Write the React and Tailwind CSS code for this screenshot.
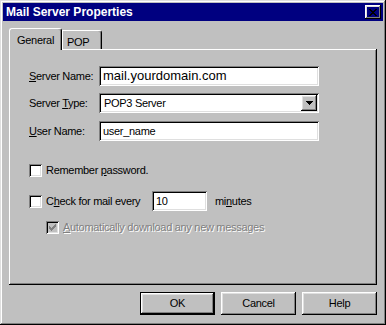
const raised =
  "shadow-[inset_-1px_-1px_#000,inset_1px_1px_#fff,inset_-2px_-2px_#808080,inset_2px_2px_#dfdfdf]";
const sunken =
  "shadow-[inset_1px_1px_#808080,inset_-1px_-1px_#fff,inset_2px_2px_#000,inset_-2px_-2px_#dfdfdf]";

const CheckBox = ({ checked, disabled }) => (
  <div
    className={`w-[13px] h-[13px] shrink-0 ${sunken} ${
      disabled ? "bg-[#c0c0c0]" : "bg-white"
    }`}
  >
    {checked && (
      <svg width="13" height="13" viewBox="0 0 13 13" shapeRendering="crispEdges">
        <path
          fill={disabled ? "#808080" : "#000"}
          d="M9 3h1v3H9zM8 4h1v3H8zM7 5h1v3H7zM6 6h1v3H6zM5 7h1v3H5zM4 6h1v3H4zM3 5h1v3H3z"
        />
      </svg>
    )}
  </div>
);

const Button = ({ children, isDefault }) => (
  <div
    className={`w-[75px] h-[23px] flex items-center justify-center text-[11px] ${
      isDefault ? "border border-black" : ""
    } ${raised}`}
  >
    {children}
  </div>
);

const App = () => {
  return (
    <div className="w-[386px] h-[325px] bg-[#c0c0c0] p-[3px] flex flex-col text-black font-['Liberation_Sans',Arial,sans-serif] tracking-[-0.3px] shadow-[inset_-1px_-1px_#000,inset_1px_1px_#dfdfdf,inset_-2px_-2px_#808080,inset_2px_2px_#fff]">
      <div className="h-[18px] bg-[#000080] flex items-center justify-between pl-[3px] pr-[2px]">
        <span className="text-white font-bold text-[12px] tracking-normal">
          Mail Server Properties
        </span>
        <div className={`w-[16px] h-[14px] flex items-center justify-center ${raised}`}>
          <svg width="8" height="7" viewBox="0 0 8 7" shapeRendering="crispEdges">
            <path
              fill="#000"
              d="M0 0h2v1H0zM6 0h2v1H6zM1 1h2v1H1zM5 1h2v1H5zM2 2h4v1H2zM3 3h2v1H3zM2 4h4v1H2zM1 5h2v1H1zM5 5h2v1H5zM0 6h2v1H0zM6 6h2v1H6z"
            />
          </svg>
        </div>
      </div>

      <div className="flex-1 px-[6px] flex flex-col">
        <div className="mt-[7px] h-[22px] -mb-[1px] flex items-start relative z-10 text-[11px]">
          <div className="w-[53px] h-[22px] bg-[#c0c0c0] border-l border-t border-white border-r border-r-black rounded-t-[3px] shadow-[inset_-1px_0_#808080] pl-[7px] pt-[3px]">
            General
          </div>
          <div className="mt-[2px] w-[40px] h-[19px] border-l border-t border-white border-r border-r-black rounded-tr-[3px] shadow-[inset_-1px_0_#808080] pl-[4px] pt-[3px]">
            POP
          </div>
        </div>

        <div className="h-[236px] pt-[17px] pl-[20px] flex flex-col text-[11px] shadow-[inset_-1px_-1px_#000,inset_1px_1px_#fff,inset_-2px_-2px_#808080]">
          <div className="flex items-center h-[20px]">
            <span className="w-[70px]">
              <span className="underline underline-offset-[1px]">S</span>erver Name:
            </span>
            <div className={`w-[220px] h-[20px] bg-white pl-[4px] flex items-center text-[13px] tracking-normal ${sunken}`}>
              mail.yourdomain.com
            </div>
          </div>

          <div className="flex items-center h-[20px] mt-[7px]">
            <span className="w-[70px]">
              Server <span className="underline underline-offset-[1px]">T</span>ype:
            </span>
            <div className={`w-[220px] h-[20px] bg-white p-[2px] flex items-center ${sunken}`}>
              <span className="flex-1 pl-[3px]">POP3 Server</span>
              <div className={`w-[16px] h-[16px] bg-[#c0c0c0] flex items-center justify-center ${raised}`}>
                <svg width="7" height="4" viewBox="0 0 7 4" shapeRendering="crispEdges">
                  <path fill="#000" d="M0 0h7v1H0zM1 1h5v1H1zM2 2h3v1H2zM3 3h1v1H3z" />
                </svg>
              </div>
            </div>
          </div>

          <div className="flex items-center h-[20px] mt-[8px]">
            <span className="w-[70px]">
              <span className="underline underline-offset-[1px]">U</span>ser Name:
            </span>
            <div className={`w-[220px] h-[20px] bg-white pl-[4px] flex items-center ${sunken}`}>
              user_name
            </div>
          </div>

          <div className="flex items-center h-[13px] mt-[23px]">
            <CheckBox />
            <span className="ml-[4px]">
              Remember <span className="underline underline-offset-[1px]">p</span>assword.
            </span>
          </div>

          <div className="flex items-center h-[20px] mt-[14px]">
            <CheckBox />
            <span className="ml-[4px] w-[106px]">
              C<span className="underline underline-offset-[1px]">h</span>eck for mail every
            </span>
            <div className={`w-[55px] h-[20px] bg-white pl-[4px] flex items-center ${sunken}`}>
              10
            </div>
            <span className="ml-[8px]">
              mi<span className="underline underline-offset-[1px]">n</span>utes
            </span>
          </div>

          <div className="flex items-center h-[13px] mt-[10px] pl-[17px]">
            <CheckBox checked disabled />
            <span className="ml-[4px] text-[#808080] [text-shadow:1px_1px_0_#fff]">
              <span className="underline underline-offset-[1px]">A</span>utomatically download any new messages
            </span>
          </div>
        </div>

        <div className="mt-[7px] flex justify-end gap-[6px]">
          <Button isDefault>OK</Button>
          <Button>Cancel</Button>
          <Button>Help</Button>
        </div>
      </div>
    </div>
  );
};

export default App;
